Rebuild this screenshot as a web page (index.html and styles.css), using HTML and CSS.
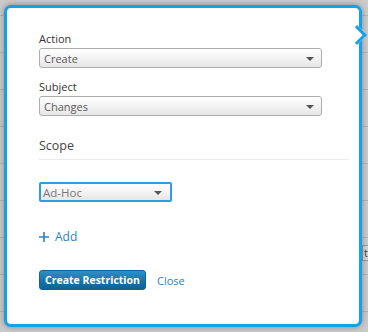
FILE: index.html
```html
<!DOCTYPE html>
<html>
<head>
<meta charset="utf-8">
<link rel="stylesheet" href="styles.css">
</head>
<body>
<div class="backdrop">
  <div class="popover">
    <div class="field">
      <div class="label">Action</div>
      <div class="select"><span>Create</span><span class="caret"></span></div>
    </div>
    <div class="field">
      <div class="label">Subject</div>
      <div class="select"><span>Changes</span><span class="caret"></span></div>
    </div>
    <div class="section-title">Scope</div>
    <div class="select select-small focused"><span>Ad-Hoc</span><span class="caret"></span></div>
    <a class="add-link"><svg class="plus" width="10" height="10" viewBox="0 0 10 10"><path d="M5 0V10M0 5H10" stroke="#2a83c2" stroke-width="1.6" fill="none"/></svg><span>Add</span></a>
    <div class="actions">
      <button class="btn-primary">Create Restriction</button>
      <a class="close-link">Close</a>
    </div>
  </div>
  <div class="peek">te</div>
</div>
</body>
</html>
```
FILE: styles.css
```css
html, body {
  margin: 0;
  padding: 0;
}
body {
  width: 368px;
  height: 332px;
  overflow: hidden;
  font-family: "Open Sans", "DejaVu Sans", sans-serif;
  background-color: #cbcbcb;
  background-image: repeating-linear-gradient(to bottom, transparent 0, transparent 15px, #b4b4b4 15px, #b4b4b4 16px, transparent 16px, transparent 37px);
}
.backdrop {
  position: relative;
  width: 368px;
  height: 332px;
  padding: 5px 0 0 4px;
  box-sizing: border-box;
}
.popover {
  position: relative;
  box-sizing: border-box;
  width: 358px;
  height: 322px;
  background: #fff;
  border: 3px solid #14a1ea;
  border-radius: 7px;
  padding: 23px 12px 0 32px;
  box-shadow: 0 0 6px rgba(0,0,0,0.35);
  z-index: 2;
}
.popover::after {
  content: "";
  position: absolute;
  box-sizing: border-box;
  width: 14px;
  height: 14px;
  left: 343px;
  top: 20px;
  background: #fff;
  border-top: 3px solid #14a1ea;
  border-right: 3px solid #14a1ea;
  transform: rotate(45deg);
}
.field {
  margin-bottom: 11px;
}
.label {
  font-size: 11px;
  line-height: 16px;
  color: #333;
  margin-bottom: 1px;
}
.select {
  box-sizing: border-box;
  width: 283px;
  height: 20px;
  border: 1px solid #adadad;
  border-radius: 3px;
  background: linear-gradient(to bottom, #ffffff 0%, #f3f3f3 50%, #e6e6e6 100%);
  display: flex;
  align-items: center;
  justify-content: space-between;
  padding: 0 7px 0 4px;
  font-size: 11px;
  color: #5a5a5a;
}
.caret {
  width: 0;
  height: 0;
  border-left: 4px solid transparent;
  border-right: 4px solid transparent;
  border-top: 4px solid #555;
  margin-top: 1px;
}
.section-title {
  margin-top: 21px;
  font-size: 12.5px;
  line-height: 18px;
  color: #444;
  padding-bottom: 4px;
  border-bottom: 1px solid #ebebeb;
  width: 310px;
}
.select-small {
  width: 133px;
  margin-top: 22px;
  color: #777;
  padding: 0 8px 0 2px;
  font-size: 11.5px;
}
.focused {
  border: 2px solid #2b9fe3;
  border-radius: 2px;
}
.add-link {
  display: flex;
  align-items: center;
  gap: 6px;
  margin-top: 26px;
  font-size: 12px;
  line-height: 18px;
  color: #2a83c2;
}
.plus {
  display: block;
}
.actions {
  display: flex;
  align-items: center;
  margin-top: 24px;
  gap: 11px;
}
.btn-primary {
  box-sizing: border-box;
  height: 20px;
  width: 107px;
  padding: 0;
  border: 1px solid #0f6494;
  border-radius: 3px;
  background: linear-gradient(to bottom, #2f8fc2 0%, #1672a6 60%, #0c6497 100%);
  color: #fff;
  font-family: "Open Sans", "DejaVu Sans", sans-serif;
  font-weight: 700;
  font-size: 10.5px;
  line-height: 18px;
}
.close-link {
  font-size: 11px;
  color: #2a83c2;
}
.peek {
  position: absolute;
  left: 362px;
  top: 245px;
  width: 10px;
  height: 14px;
  border-top: 1px solid #999;
  border-bottom: 1px solid #999;
  border-left: 1px solid #999;
  background: #d6d6d6;
  font-size: 11px;
  line-height: 14px;
  color: #444;
  padding-left: 1px;
  z-index: 1;
}
```
